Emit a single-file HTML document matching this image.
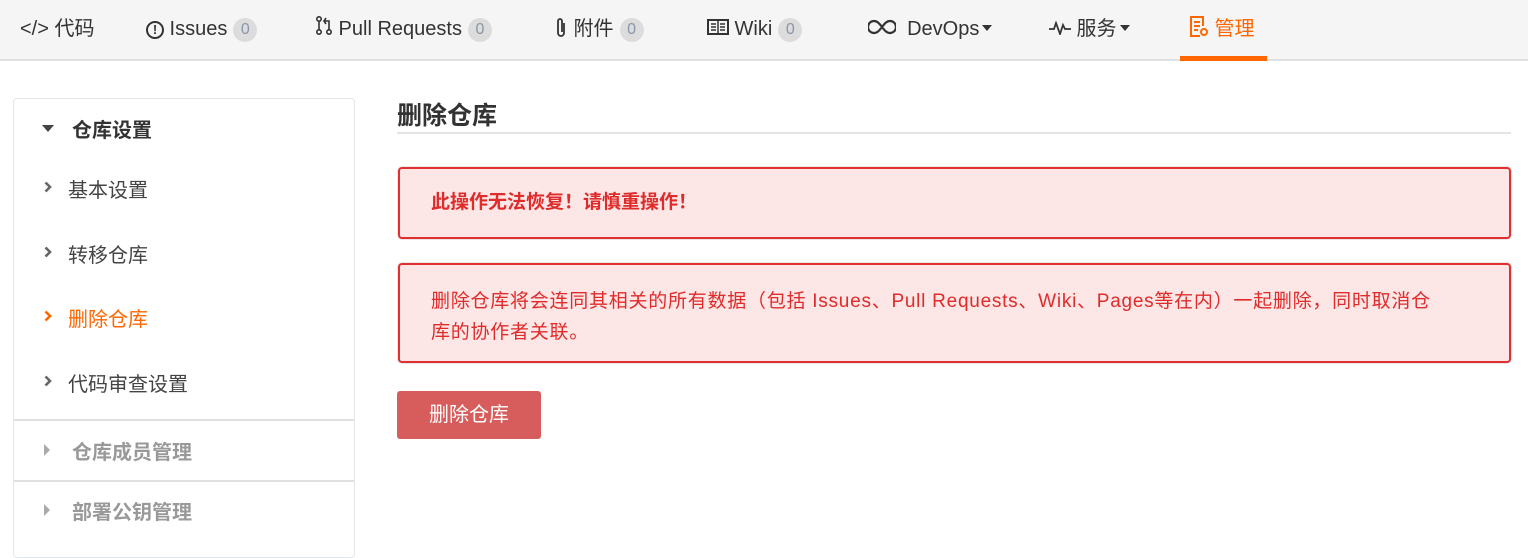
<!DOCTYPE html>
<html><head><meta charset="utf-8"><style>
*{margin:0;padding:0;box-sizing:border-box}
body{width:1528px;height:537px;overflow:hidden;background:#fff;font-family:"Liberation Sans","Noto Sans CJK SC",sans-serif;color:#333;position:relative}
.nav{position:absolute;left:0;top:0;width:1528px;height:61px;background:#f5f5f5;border-bottom:2px solid #e0e0e0}
.ni{position:absolute;top:15px;font-size:20px;color:#333;white-space:nowrap;line-height:28px}
.b{display:inline-block;background:#dcdcdc;color:#8a96a8;border-radius:12px;font-size:16px;width:24px;height:24px;line-height:24px;text-align:center;margin-left:6px;vertical-align:1px}
.car{display:inline-block;border-left:5px solid transparent;border-right:5px solid transparent;border-top:6px solid #333;vertical-align:4px;margin-left:3px}
.ul{position:absolute;left:1180px;top:56px;width:87px;height:5px;background:#f60}
.side{position:absolute;left:13px;top:98px;width:342px;height:460px;border:1px solid #e2e6ea;border-radius:4px}
.si{position:absolute;left:54px;font-size:20px;color:#444}
.ch{position:absolute;left:-24px;top:7px}
.hr{position:absolute;left:0;width:340px;height:2px;background:#e0e0e0}
.grey{position:absolute;left:58px;font-size:20px;font-weight:bold;color:#999}
.tri{position:absolute;left:-28px;top:8px;border-top:6px solid transparent;border-bottom:6px solid transparent;border-left:6px solid #aaa}
.h{position:absolute;left:397px;top:96px;font-size:25px;font-weight:bold;color:#333}
.hl{position:absolute;left:397px;top:132px;width:1114px;height:2px;background:#e4e4e4}
.al{position:absolute;left:398px;width:1113px;background:#fde6e6;border:2px solid #e23030;border-radius:4px;color:#e02b2b;font-size:19px;padding-left:31px;box-shadow:0 0 0 1px #e8e8e8}
.btn{position:absolute;left:397px;top:391px;width:144px;height:48px;background:#d75c5c;border-radius:3px;color:#fff;font-size:20px;text-align:center;line-height:48px}
</style></head><body>
<div class="nav">
<div class="ni" style="left:20px">&lt;/&gt; 代码</div>
<div class="ni" style="left:146px"><span style="display:inline-block;width:18px;height:18px;border:2px solid #333;border-radius:50%;font-size:13px;line-height:14px;text-align:center;font-weight:bold;vertical-align:1px">!</span> Issues<span class="b">0</span></div>
<div class="ni" style="left:315px"><svg width="18" height="20" viewBox="0 0 18 20" style="vertical-align:-1px"><circle cx="4" cy="3" r="2.2" fill="none" stroke="#333" stroke-width="1.6"/><circle cx="4" cy="16" r="2.2" fill="none" stroke="#333" stroke-width="1.6"/><circle cx="14" cy="16" r="2.2" fill="none" stroke="#333" stroke-width="1.6"/><path d="M4 5v9M14 14V5H9M11 2L9 5l2 3" fill="none" stroke="#333" stroke-width="1.6"/></svg> Pull Requests<span class="b">0</span></div>
<div class="ni" style="left:554px"><svg width="14" height="22" viewBox="0 0 14 22" style="vertical-align:-3px"><path d="M10 6v10a3 3 0 0 1-6 0V4a2 2 0 0 1 4 0v11" fill="none" stroke="#333" stroke-width="1.8" transform="translate(0,1)"/></svg> 附件<span class="b">0</span></div>
<div class="ni" style="left:707px"><svg width="22" height="16" viewBox="0 0 22 16" style="vertical-align:0"><rect x="1" y="1" width="20" height="14" fill="none" stroke="#333" stroke-width="2"/><path d="M11 1v14M4 5h5M4 8h5M4 11h5M13 5h5M13 8h5M13 11h5" stroke="#333" stroke-width="1.5"/></svg> Wiki<span class="b">0</span></div>
<div class="ni" style="left:868px"><svg width="28" height="16" viewBox="0 0 28 16" style="vertical-align:0"><path d="M14 8c-3-4-5-6-8-6a6 6 0 0 0 0 12c3 0 5-2 8-6s5-6 8-6a6 6 0 0 1 0 12c-3 0-5-2-8-6z" fill="none" stroke="#333" stroke-width="2.2"/></svg>&nbsp; DevOps<span class="car"></span></div>
<div class="ni" style="left:1049px"><svg width="22" height="14" viewBox="0 0 22 14"><path d="M0 8h5l2-6 4 11 3-9 2 4h6" fill="none" stroke="#333" stroke-width="1.8"/></svg> 服务<span class="car"></span></div>
<div class="ni" style="left:1189px;color:#f60"><svg width="20" height="22" viewBox="0 0 20 22" style="vertical-align:-3px"><path d="M11 20H2V1h12v9" fill="none" stroke="#f60" stroke-width="2"/><path d="M5 6h6M5 10h6M5 14h4" stroke="#f60" stroke-width="2"/><circle cx="15" cy="16" r="3" fill="none" stroke="#f60" stroke-width="2"/></svg> 管理</div>
<div class="ul"></div>
</div>
<div class="side">
<div style="position:absolute;left:28px;top:26px;border-left:6px solid transparent;border-right:6px solid transparent;border-top:7px solid #444"></div>
<div style="position:absolute;left:58px;top:15px;font-size:20px;font-weight:bold;color:#333">仓库设置</div>
<div class="si" style="top:75px"><svg class="ch" width="8" height="12" viewBox="0 0 8 12"><path d="M1.5 1.5L6 6l-4.5 4.5" fill="none" stroke="#666" stroke-width="2.6"/></svg>基本设置</div>
<div class="si" style="top:140px"><svg class="ch" width="8" height="12" viewBox="0 0 8 12"><path d="M1.5 1.5L6 6l-4.5 4.5" fill="none" stroke="#666" stroke-width="2.6"/></svg>转移仓库</div>
<div class="si" style="top:204px;color:#f60"><svg class="ch" width="8" height="12" viewBox="0 0 8 12"><path d="M1.5 1.5L6 6l-4.5 4.5" fill="none" stroke="#f60" stroke-width="2.6"/></svg>删除仓库</div>
<div class="si" style="top:269px"><svg class="ch" width="8" height="12" viewBox="0 0 8 12"><path d="M1.5 1.5L6 6l-4.5 4.5" fill="none" stroke="#666" stroke-width="2.6"/></svg>代码审查设置</div>
<div class="hr" style="top:320px"></div>
<div class="grey" style="top:337px"><span class="tri"></span>仓库成员管理</div>
<div class="hr" style="top:381px"></div>
<div class="grey" style="top:397px"><span class="tri"></span>部署公钥管理</div>
</div>
<div class="h">删除仓库</div>
<div class="hl"></div>
<div class="al" style="top:167px;height:72px;line-height:68px;font-weight:bold">此操作无法恢复！请慎重操作！</div>
<div class="al" style="top:263px;height:100px;padding-top:21px;line-height:31px;padding-right:62px;letter-spacing:0.75px">删除仓库将会连同其相关的所有数据（包括 Issues、Pull Requests、Wiki、Pages等在内）一起删除，同时取消仓库的协作者关联。</div>
<div class="btn">删除仓库</div>
</body></html>
